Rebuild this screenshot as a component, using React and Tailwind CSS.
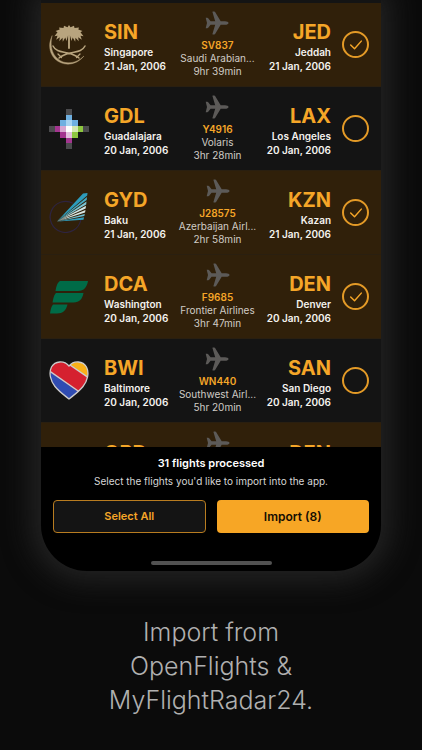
import { useState } from "react";

const SaudiaLogo = () => (
  <svg viewBox="0 0 40 40" className="h-10 w-10" fill="none" stroke="#b8a47e" strokeLinecap="round">
    <path d="M3 11C-1 19 0 28 6 34c8 7.500 21 7 29-3-8 8-19 9-26 3C2.500 28.500 1 20 3 11Z" fill="#b8a47e" strokeWidth=".4" />
    <path d="M4 21c3 6 9 5.500 15 7 5 1.300 8 2.500 11 5M36 21c-3 6-9 5.500-15 7-5 1.300-8 2.500-11 5" strokeWidth="1.500" />
    <path d="m9 29 3.500 3.500M31 29l-3.500 3.500" strokeWidth="1.300" />
    <path d="M20 6v17" strokeWidth="1.900" />
    <path
      d="M20 0l1.500 2.200L25 .8l.5 2.200 4.500-.5-.7 2 4.200 1.500-2 1.200 3 4-3-.4 1.300 3.900-3.600-2.500.5 4-3.200-3.500-.3 4-2.500-4.200L22.500 16 20.800 10h-1.600l-1.700 6-1.200-3.500-2.500 4.200-.3-4-3.200 3.500.5-4-3.600 2.500 1.300-3.900-3 .4 3-4-2-1.200L10.700 4.500 10 2.500l4.500.5.5-2.200 3.500 1.400Z"
      fill="#b8a47e"
      stroke="none"
    />
  </svg>
);

const PIXELS = [
  [3, 0, "#4b4b4d"],
  [3, 1, "#6fb0e0"],
  [2, 2, "#6fb0e0"], [3, 2, "#a8d4f0"], [4, 2, "#6fb0e0"],
  [0, 3, "#4b4b4d"], [1, 3, "#a3358f"], [2, 3, "#d7a6d0"], [3, 3, "#ffffff"], [4, 3, "#d5e8b0"], [5, 3, "#8dc63f"], [6, 3, "#4b4b4d"],
  [2, 4, "#a3358f"], [3, 4, "#e3c0de"], [4, 4, "#8dc63f"],
  [3, 5, "#a3358f"],
  [3, 6, "#4b4b4d"]
];

const VolarisLogo = () => (
  <svg viewBox="0 0 7 7" className="h-10 w-10" shapeRendering="crispEdges">
    {PIXELS.map(([x, y, fill]) => (
      <rect key={`${x}-${y}`} x={x} y={y} width="1" height="1" fill={fill} />
    ))}
  </svg>
);

const AzalLogo = () => (
  <svg viewBox="0 0 40 40" className="h-10 w-10">
    <path d="M24 10.300A15.500 15.500 0 1 0 31.800 27" fill="none" stroke="#2e2440" strokeWidth="1.200" />
    <path d="M8 28.500 34 .5l4.500-.5-.3 2.500Z" fill="#2d9cbc" />
    <path d="m8 28.500 30-24.500-.3 3Z" fill="#45acc7" />
    <path d="m8 28.500 29.500-20-.3 3Z" fill="#7cc4d3" />
    <path d="m8 28.500 29-15.700-.4 2.800Z" fill="#cfe5e6" />
    <path d="m8 28.500 28.500-11.500-.5 2.600Z" fill="#d8e6e2" />
    <path d="m8 28.500 27.800-7.600-.5 2.200Z" fill="#6dbccf" />
    <path d="m8 28.500 27-4.200-.5 2.400Z" fill="#2f9dbd" />
  </svg>
);

const FrontierLogo = () => (
  <svg viewBox="0 0 40 40" className="h-10 w-10" fill="#006b47">
    <path d="M11 4h28c-1 6-4 10-10 10H6.500C7.500 9 8 6 11 4Z" />
    <path d="M7 16h27.500c-1.200 6-4 9.500-10 9.500H3.500C4.500 20.500 5 18 7 16Z" />
    <path d="M4 27.500h14.500C17 33.500 14 36.500 8 36.500H1c.7-4 1.200-7 3-9Z" />
  </svg>
);

const SouthwestLogo = () => (
  <svg viewBox="0 0 40 40" className="h-10 w-10">
    <clipPath id="heart">
      <path d="M20 5C15-1 6 0 2.500 6-.5 12 1.500 20 6 25.500 10 30.500 15 34 20 38c5-4 10-7.500 14-12.500 4.500-5.500 6.500-13.500 3.500-19.500C34 0 25-1 20 5Z" />
    </clipPath>
    <g clipPath="url(#heart)">
      <path d="M0 0h40v40H0Z" fill="#d5212f" />
      <path d="M17 1 40 17V-1Z" fill="#f9b019" />
      <path d="M0 10 31 32 20 40H0Z" fill="#304cb2" />
      <path d="m18 2 22 15M-1 9l33 23" stroke="#ccc" strokeWidth="1.400" />
    </g>
    <path d="M20 5C15-1 6 0 2.500 6-.5 12 1.500 20 6 25.500 10 30.500 15 34 20 38c5-4 10-7.500 14-12.500 4.500-5.500 6.500-13.500 3.500-19.500C34 0 25-1 20 5Z" fill="none" stroke="#ccc" strokeWidth="1.300" />
  </svg>
);

const PlaneIcon = () => (
  <svg viewBox="0 0 24 24" className="h-6 w-6" fill="#5c5a58">
    <path d="M.7 6.800h1.600c.4 0 .7.200.9.500L5.600 10.200h4.600L7.500 1.300C7.300.8 7.600.5 8 .5h1.200c.4 0 .7.200.9.500l5.600 9.200H20c2 0 3.500.8 3.500 1.800S22 13.800 20 13.800h-4.300L10.100 23c-.2.300-.5.500-.9.500H8c-.4 0-.7-.3-.5-.8l2.700-8.900H5.600l-2.400 2.900c-.2.300-.5.500-.9.500H.7L2 12Z" />
  </svg>
);

const FLIGHTS = [
  { id: "SV837", logo: SaudiaLogo, from: "SIN", fromCity: "Singapore", to: "JED", toCity: "Jeddah", date: "21 Jan, 2006", airline: "Saudi Arabian...", duration: "9hr 39min", selected: true },
  { id: "Y4916", logo: VolarisLogo, from: "GDL", fromCity: "Guadalajara", to: "LAX", toCity: "Los Angeles", date: "20 Jan, 2006", airline: "Volaris", duration: "3hr 28min", selected: false },
  { id: "J28575", logo: AzalLogo, from: "GYD", fromCity: "Baku", to: "KZN", toCity: "Kazan", date: "21 Jan, 2006", airline: "Azerbaijan Airl...", duration: "2hr 58min", selected: true },
  { id: "F9685", logo: FrontierLogo, from: "DCA", fromCity: "Washington", to: "DEN", toCity: "Denver", date: "20 Jan, 2006", airline: "Frontier Airlines", duration: "3hr 47min", selected: true },
  { id: "WN440", logo: SouthwestLogo, from: "BWI", fromCity: "Baltimore", to: "SAN", toCity: "San Diego", date: "20 Jan, 2006", airline: "Southwest Airl...", duration: "5hr 20min", selected: false }
];

const Airport = ({ code, city, date, className }) => (
  <div className={className}>
    <div className="text-[20px] leading-[26px] font-bold text-[#f5a628]">{code}</div>
    <div className="text-[10px] leading-[14px] font-semibold whitespace-nowrap text-[#f4f2ee]">
      <div>{city}</div>
      <div>{date}</div>
    </div>
  </div>
);

const FlightRow = ({ flight, checked, onToggle }) => {
  const Logo = flight.logo;

  return (
    <li className={checked ? "bg-[#30200a]" : "bg-[#141414]"}>
      <label className="grid h-[84px] cursor-pointer grid-cols-[44px_minmax(0,1fr)_auto_minmax(0,1fr)_27px] items-center border-b border-[#2a1f10] pr-3 pl-2">
        <Logo />
        <Airport code={flight.from} city={flight.fromCity} date={flight.date} className="pt-[2px] pl-[11px]" />
        <div className="flex flex-col items-center text-[10px] leading-[13px] whitespace-nowrap text-[#d0ccc6]">
          <PlaneIcon />
          <div className="mt-1 font-semibold text-[#f5a628]">{flight.id}</div>
          <div>{flight.airline}</div>
          <div>{flight.duration}</div>
        </div>
        <Airport code={flight.to} city={flight.toCity} date={flight.date} className="justify-self-end pt-[2px] pr-[11px] text-right" />
        <span className="grid">
          <input
            type="checkbox"
            checked={checked}
            onChange={onToggle}
            className="col-start-1 row-start-1 h-[27px] w-[27px] appearance-none rounded-full border-2 border-[#e39a27]"
          />
          {checked && (
            <svg viewBox="0 0 28 28" className="pointer-events-none col-start-1 row-start-1 h-[27px] w-[27px]" fill="none" stroke="#f5a628" strokeWidth="1.500" strokeLinecap="round" strokeLinejoin="round">
              <path d="m9 14.500 4 4 7-8" />
            </svg>
          )}
        </span>
      </label>
    </li>
  );
};

const App = () => {
  const [selected, setSelected] = useState(FLIGHTS.filter((f) => f.selected).map((f) => f.id));

  const toggle = (id) =>
    setSelected((prev) => (prev.includes(id) ? prev.filter((x) => x !== id) : [...prev, id]));

  return (
    <main className="min-h-screen overflow-hidden bg-[#0b0b0b] px-[41px] font-['Inter',sans-serif]">
      <section className="overflow-hidden rounded-b-[46px] bg-black shadow-[0_0_28px_10px_#232323]">
        <ul className="max-h-[447px] overflow-hidden bg-[#141414] pt-[3px]">
          {FLIGHTS.map((flight) => (
            <FlightRow
              key={flight.id}
              flight={flight}
              checked={selected.includes(flight.id)}
              onToggle={() => toggle(flight.id)}
            />
          ))}
          <li className="grid h-[84px] grid-cols-[44px_minmax(0,1fr)_auto_minmax(0,1fr)_27px] bg-[#30200a] pr-3 pl-2 text-[20px] leading-[26px] font-bold text-[#f5a628]">
            <span />
            <span className="pt-[17px] pl-[11px]">ORD</span>
            <span className="pt-2">
              <PlaneIcon />
            </span>
            <span className="pt-[17px] pr-[11px] text-right">DEN</span>
          </li>
        </ul>

        <footer className="flex flex-col items-center px-3 pt-2 pb-[6px]">
          <h2 className="text-[11px] leading-4 font-semibold text-white">31 flights processed</h2>
          <p className="mt-[2px] text-[10px] leading-4 text-[#d6d6d6]">
            Select the flights you'd like to import into the app.
          </p>
          <div className="mt-[11px] grid w-full grid-cols-2 gap-[11px] font-semibold">
            <button
              type="button"
              onClick={() => setSelected(FLIGHTS.map((f) => f.id))}
              className="h-[33px] rounded border border-[#b87c20] bg-[#141414] text-[11px] text-[#f5a628]"
            >
              Select All
            </button>
            <button type="button" className="h-[33px] rounded bg-[#f7a625] text-[12px] text-[#140d02]">
              Import (8)
            </button>
          </div>
          <div className="mt-7 h-1 w-[121px] rounded-full bg-[#525252]" />
        </footer>
      </section>

      <h1 className="mt-11 text-center text-[25px] leading-[34px] font-light text-[#b0b0b0]">
        Import from
        <br />
        OpenFlights &amp;
        <br />
        MyFlightRadar24.
      </h1>
    </main>
  );
};

export default App;
